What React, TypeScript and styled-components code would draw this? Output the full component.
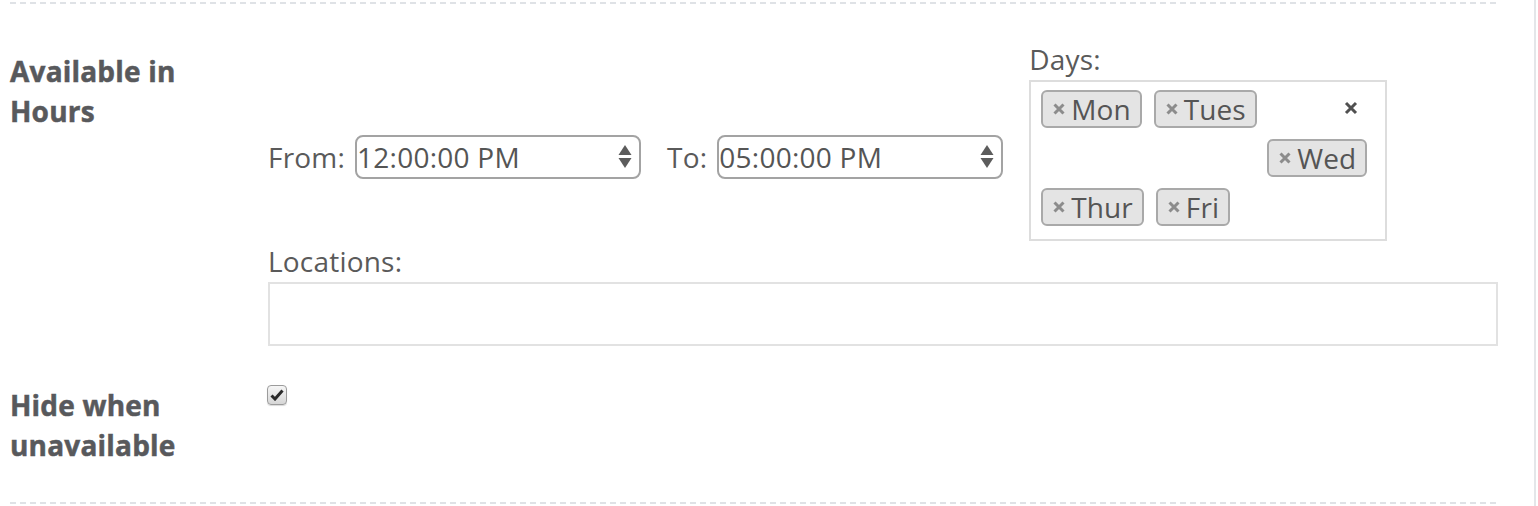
import styled, { createGlobalStyle } from "styled-components";

const GlobalStyle = createGlobalStyle`
  html, body {
    margin: 0;
    padding: 0;
    background: #fff;
  }
  body {
    font-family: "Open Sans", "Liberation Sans", sans-serif;
    color: #5a5a5a;
  }
`;

const days = [["Mon", "Tues"], ["Wed"], ["Thur", "Fri"]];

function TagX() {
  return (
    <svg width="12" height="12" viewBox="0 0 12 12">
      <path d="M1.5 1.5 L10.5 10.5 M10.5 1.5 L1.5 10.5" stroke="#8c8c8c" strokeWidth="3" />
    </svg>
  );
}

function Spinner() {
  return (
    <svg width="14" height="24" viewBox="0 0 14 24">
      <path d="M7 0 L13.5 10 L0.5 10 Z" fill="#5c5c5c" />
      <path d="M0.5 13 L13.5 13 L7 23 Z" fill="#5c5c5c" />
    </svg>
  );
}

function TimeSelect({ label, value }: { label: string; value: string }) {
  return (
    <TimeField>
      <FieldText>{label}</FieldText>
      <SelectWrap>
        <Select defaultValue={value}>
          <option>{value}</option>
        </Select>
        <Arrows>
          <Spinner />
        </Arrows>
      </SelectWrap>
    </TimeField>
  );
}

export default function App() {
  return (
    <>
      <GlobalStyle />
      <Page>
        <Divider />
        <Row>
          <Label>Available in Hours</Label>
          <Content>
            <HoursLine>
              <TimeSelect label="From:" value="12:00:00 PM" />
              <TimeSelect label="To:" value="05:00:00 PM" />
              <DaysField>
                <FieldText>Days:</FieldText>
                <DaysBox>
                  {days.map((row, i) => (
                    <TagRow key={i} $indent={i === 1}>
                      {row.map((d) => (
                        <Tag key={d}>
                          <TagX />
                          <span>{d}</span>
                        </Tag>
                      ))}
                      {i === 0 && (
                        <ClearAll>
                          <svg width="14" height="14" viewBox="0 0 14 14">
                            <path d="M2 2 L12 12 M12 2 L2 12" stroke="#505050" strokeWidth="3" />
                          </svg>
                        </ClearAll>
                      )}
                    </TagRow>
                  ))}
                </DaysBox>
              </DaysField>
            </HoursLine>
            <LocationsLabel>Locations:</LocationsLabel>
            <LocationsInput />
          </Content>
        </Row>
        <Row $second>
          <Label>Hide when unavailable</Label>
          <Content>
            <Checkbox>
              <svg width="14" height="12" viewBox="0 0 14 12">
                <path d="M1.5 6.5 L5 10 L12.5 1.5" stroke="#2a2a2a" strokeWidth="3" fill="none" />
              </svg>
            </Checkbox>
          </Content>
        </Row>
        <Divider $bottom />
      </Page>
    </>
  );
}

const Page = styled("div")`
  width: 1536px;
  height: 506px;
  box-sizing: border-box;
  padding: 2px 36px 0 10px;
  border-right: 2px solid #e4e6e9;
`;

const Divider = styled("div")<{ $bottom?: boolean }>`
  height: 2px;
  margin-top: ${(p) => (p.$bottom ? "37px" : "0")};
  background: repeating-linear-gradient(
    to right,
    #dfe2e6 0 6px,
    transparent 6px 10px
  );
`;

const Row = styled("div")<{ $second?: boolean }>`
  display: flex;
  padding-top: ${(p) => (p.$second ? "29px" : "37px")};
`;

const Label = styled("div")`
  flex: 0 0 258px;
  box-sizing: border-box;
  padding-right: 58px;
  margin-top: 10px;
  font-size: 28px;
  line-height: 40px;
  font-weight: 700;
  letter-spacing: 0.2px;
  -webkit-text-stroke: 0.5px #58595c;
  color: #58595c;
`;

const Content = styled("div")`
  flex: 1;
  display: flex;
  flex-direction: column;
  align-items: flex-start;
`;

const HoursLine = styled("div")`
  display: flex;
  align-items: flex-start;
  gap: 26px;
`;

const TimeField = styled("div")`
  display: flex;
  align-items: center;
  gap: 10px;
  height: 44px;
  margin-top: 94px;
`;

const FieldText = styled("span")`
  font-size: 28px;
  line-height: 36px;
  letter-spacing: 0.2px;
  color: #5a5a5a;
`;

const SelectWrap = styled("div")`
  position: relative;
  width: 286px;
  height: 44px;
`;

const Select = styled("select")`
  appearance: none;
  width: 100%;
  height: 100%;
  box-sizing: border-box;
  border: 2px solid #a3a3a3;
  border-radius: 8px;
  background: #fff;
  padding: 0;
  font-family: "Open Sans", "Liberation Sans", sans-serif;
  font-size: 28px;
  letter-spacing: 0.25px;
  color: #555;
  outline: none;
`;

const Arrows = styled("span")`
  position: absolute;
  right: 9px;
  top: 10px;
  display: flex;
  pointer-events: none;
`;

const DaysField = styled("div")`
  display: flex;
  flex-direction: column;
  gap: 3px;
`;

const DaysBox = styled("div")`
  width: 358px;
  height: 161px;
  box-sizing: border-box;
  border: 2px solid #dddddd;
  padding: 8px 10px 0 10px;
  display: flex;
  flex-direction: column;
  gap: 11px;
`;

const TagRow = styled("div")<{ $indent?: boolean }>`
  display: flex;
  align-items: center;
  gap: 12px;
  padding-left: ${(p) => (p.$indent ? "226px" : "0")};
`;

const Tag = styled("span")`
  display: inline-flex;
  align-items: center;
  gap: 6px;
  height: 38px;
  box-sizing: border-box;
  padding: 0 9px 0 10px;
  border: 2px solid #a9a9a9;
  border-radius: 6px;
  background: #e4e4e4;
  font-size: 28px;
  line-height: 34px;
  letter-spacing: 0.1px;
  color: #555;
`;

const ClearAll = styled("span")`
  display: flex;
  margin-left: auto;
  margin-right: 17px;
  margin-top: -2px;
`;

const LocationsLabel = styled("span")`
  margin-top: 2px;
  font-size: 28px;
  line-height: 36px;
  letter-spacing: 0.2px;
  color: #5a5a5a;
`;

const LocationsInput = styled("div")`
  align-self: stretch;
  margin-top: 3px;
  height: 64px;
  box-sizing: border-box;
  border: 2px solid #e2e2e2;
`;

const Checkbox = styled("span")`
  display: flex;
  align-items: center;
  justify-content: center;
  margin-top: 10px;
  margin-left: -1px;
  width: 20px;
  height: 20px;
  box-sizing: border-box;
  border: 1px solid #9c9c9c;
  border-radius: 4px;
  background: linear-gradient(#f6f6f6, #d6d6d6);
  box-shadow: 0 1px 1px rgba(0, 0, 0, 0.15);
`;
